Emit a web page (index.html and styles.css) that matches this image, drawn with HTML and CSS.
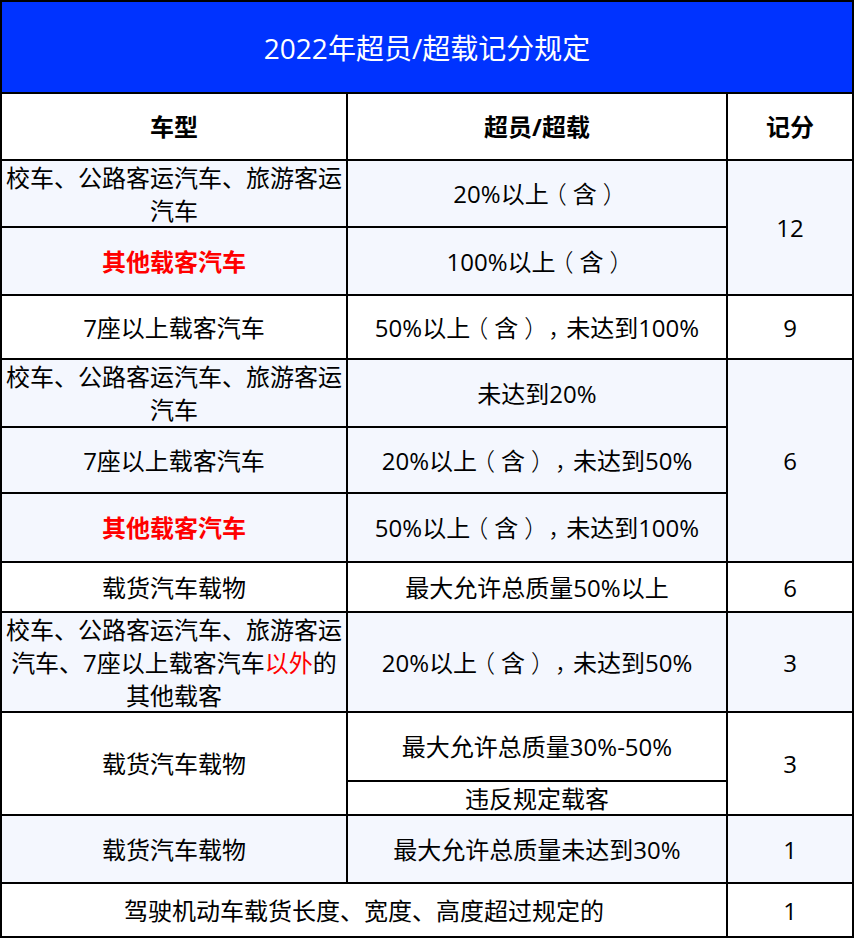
FILE: index.html
```html
<!DOCTYPE html>
<html lang="zh-CN">
<head>
<meta charset="utf-8">
<title>2022年超员/超载记分规定</title>
<link rel="stylesheet" href="styles.css">
</head>
<body>
<div class="sheet">
  <div class="cell title span3">2022年超员/超载记分规定</div>

  <div class="cell head">车型</div>
  <div class="cell head">超员/超载</div>
  <div class="cell head">记分</div>

  <div class="cell lt">校车、公路客运汽车、旅游客运汽车</div>
  <div class="cell lt"><span class="txt">20%以上<span class="pu">（</span>含<span class="pu">）</span></span></div>
  <div class="cell lt rs2">12</div>

  <div class="cell lt red">其他载客汽车</div>
  <div class="cell lt"><span class="txt">100%以上<span class="pu">（</span>含<span class="pu">）</span></span></div>

  <div class="cell">7座以上载客汽车</div>
  <div class="cell"><span class="txt">50%以上<span class="pu">（</span>含<span class="pu">）</span><span class="pu">，</span>未达到100%</span></div>
  <div class="cell">9</div>

  <div class="cell lt">校车、公路客运汽车、旅游客运汽车</div>
  <div class="cell lt">未达到20%</div>
  <div class="cell lt rs3">6</div>

  <div class="cell lt">7座以上载客汽车</div>
  <div class="cell lt"><span class="txt">20%以上<span class="pu">（</span>含<span class="pu">）</span><span class="pu">，</span>未达到50%</span></div>

  <div class="cell lt red">其他载客汽车</div>
  <div class="cell lt"><span class="txt">50%以上<span class="pu">（</span>含<span class="pu">）</span><span class="pu">，</span>未达到100%</span></div>

  <div class="cell">载货汽车载物</div>
  <div class="cell">最大允许总质量50%以上</div>
  <div class="cell">6</div>

  <div class="cell lt"><div class="lines"><span class="ln">校车、公路客运汽车、旅游客运</span><span class="ln"><span>汽车、7座以上载客汽车</span><span class="hl">以外</span><span>的</span></span><span class="ln">其他载客</span></div></div>
  <div class="cell lt"><span class="txt">20%以上<span class="pu">（</span>含<span class="pu">）</span><span class="pu">，</span>未达到50%</span></div>
  <div class="cell lt">3</div>

  <div class="cell rs2">载货汽车载物</div>
  <div class="cell">最大允许总质量30%-50%</div>
  <div class="cell rs2">3</div>
  <div class="cell">违反规定载客</div>

  <div class="cell lt">载货汽车载物</div>
  <div class="cell lt">最大允许总质量未达到30%</div>
  <div class="cell lt">1</div>

  <div class="cell span2">驾驶机动车载货长度、宽度、高度超过规定的</div>
  <div class="cell">1</div>
</div>
</body>
</html>
```

FILE: styles.css
```css
html, body {
  margin: 0;
  padding: 0;
  background: #ffffff;
}

.sheet {
  display: grid;
  width: 854px;
  box-sizing: border-box;
  grid-template-columns: 346px 380px 126px;
  grid-template-rows: 92px 67px 67px 68px 64px 68px 66px 69px 50px 100px 69px 34px 68px 54px;
  border-left: 2px solid #000;
  border-top: 2px solid #000;
  font-family: "Open Sans", "Noto Sans CJK SC", sans-serif;
  font-size: 24px;
  line-height: 33px;
  color: #000;
}

.cell {
  box-sizing: border-box;
  border-right: 2px solid #000;
  border-bottom: 2px solid #000;
  display: flex;
  align-items: center;
  justify-content: center;
  text-align: center;
  background: #ffffff;
  overflow: hidden;
}

.lt {
  background: #f4f7fe;
}

.title {
  background: #0033ff;
  color: #ffffff;
  font-size: 28px;
  line-height: 36px;
  padding-top: 2px;
}

.head {
  font-weight: 700;
}

.red {
  color: #ff0000;
  font-weight: 700;
}

.hl {
  color: #ff0000;
}

.lines {
  display: flex;
  flex-direction: column;
  align-items: center;
}

.ln {
  display: block;
  white-space: nowrap;
}

.pu {
  display: inline-block;
  width: 1em;
  text-align: center;
  font-feature-settings: "halt";
  font-weight: 300;
}

.span3 {
  grid-column: span 3;
}

.span2 {
  grid-column: span 2;
}

.rs2 {
  grid-row: span 2;
}

.rs3 {
  grid-row: span 3;
}
```
